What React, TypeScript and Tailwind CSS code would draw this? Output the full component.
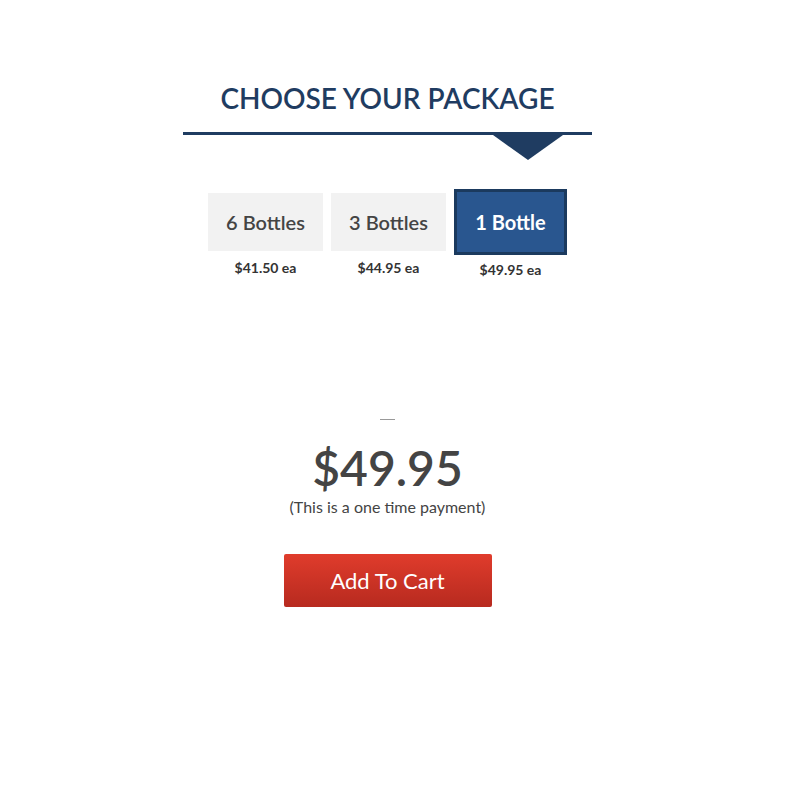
const packages = [
  { label: "6 Bottles", price: "$41.50 ea", active: false },
  { label: "3 Bottles", price: "$44.95 ea", active: false },
  { label: "1 Bottle", price: "$49.95 ea", active: true },
];

export default function App() {
  return (
    <div className="min-h-[800px] bg-white font-['Lato','Noto_Sans',sans-serif] text-[#444]">
      <div className="ml-[183px] w-[409px] pt-[80px] flex flex-col items-center">
        {/* Heading */}
        <h2 className="text-[28px] leading-[36px] font-semibold text-[#1f3c61]">
          CHOOSE YOUR PACKAGE
        </h2>
        <div className="mt-[16px] w-full h-[3px] bg-[#1f3c61]" />
        <div className="w-full flex justify-end pr-[29px]">
          <svg width="70" height="25" viewBox="0 0 70 25">
            <polygon points="0,0 70,0 35,25" fill="#1f3c61" />
          </svg>
        </div>

        {/* Package options */}
        <div className="mt-[33px] flex gap-[8px] items-start">
          {packages.map((p) => (
            <div key={p.label} className="flex flex-col items-center">
              {p.active ? (
                <button className="w-[113px] h-[66px] -mt-[4px] bg-[#29568f] border-[3px] border-[#1b3a5e] text-white text-[20px] font-bold">
                  {p.label}
                </button>
              ) : (
                <button className="w-[115px] h-[58px] bg-[#f2f2f2] text-[#444] text-[20px] font-semibold">
                  {p.label}
                </button>
              )}
              <span className={`${p.active ? "mt-[6px]" : "mt-[8px]"} text-[14px] leading-[17px] font-bold text-[#333]`}>
                {p.price}
              </span>
            </div>
          ))}
        </div>

        {/* Price */}
        <div className="mt-[141px] w-[15px] h-[1px] bg-[#999]" />
        <div className="mt-[20px] text-[48px] leading-[56px] font-semibold text-[#444]">
          $49.95
        </div>
        <div className="mt-[1px] text-[16px] leading-[20px] text-[#444]">
          (This is a one time payment)
        </div>

        <button className="mt-[37px] w-[208px] h-[53px] rounded-[2px] bg-gradient-to-b from-[#e03c2c] to-[#b72a1f] text-white text-[22px]">
          Add To Cart
        </button>
      </div>
    </div>
  );
}
